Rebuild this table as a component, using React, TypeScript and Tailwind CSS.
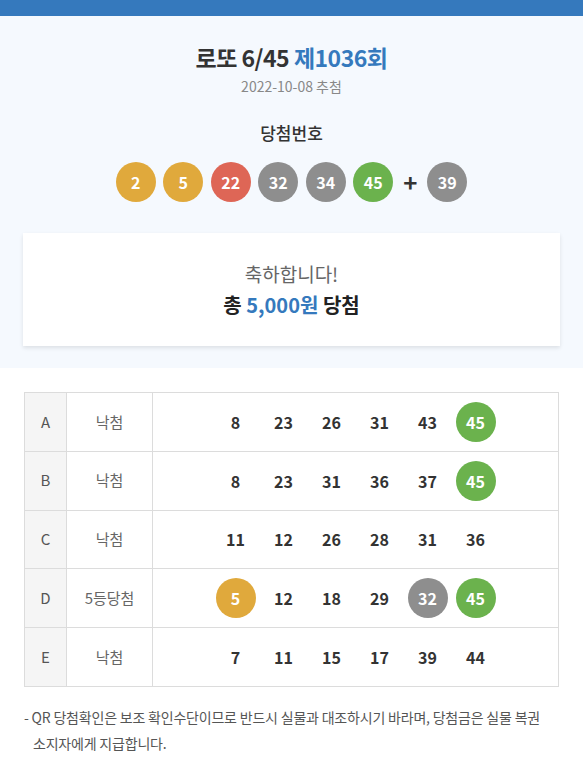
import React from 'react'

const ballColor = (n: number) => {
  if (n <= 10) return 'bg-[#e0a93c]'
  if (n <= 20) return 'bg-[#4a8fd6]'
  if (n <= 30) return 'bg-[#de6656]'
  if (n <= 40) return 'bg-[#8e8e8e]'
  return 'bg-[#6bb24d]'
}

const Ball = ({ n }: { n: number }) => (
  <div className={`flex h-10 w-10 items-center justify-center rounded-full text-[16px] font-semibold text-white ${ballColor(n)}`}>
    {n}
  </div>
)

const winning = [2, 5, 22, 32, 34, 45]
const bonus = 39

const games = [
  { key: 'A', result: '낙첨', nums: [8, 23, 26, 31, 43, 45] },
  { key: 'B', result: '낙첨', nums: [8, 23, 31, 36, 37, 45] },
  { key: 'C', result: '낙첨', nums: [11, 12, 26, 28, 31, 36] },
  { key: 'D', result: '5등당첨', nums: [5, 12, 18, 29, 32, 45] },
  { key: 'E', result: '낙첨', nums: [7, 11, 15, 17, 39, 44] },
]

export default function App() {
  return (
    <div className="min-h-[760px] bg-white font-['Noto_Sans_CJK_KR','Noto_Sans',sans-serif] text-[#333]">
      {/* 상단 바 */}
      <div className="h-4 bg-[#3579bd]" />

      {/* 당첨번호 영역 */}
      <div className="bg-[#f5f9fe] px-[23px] pt-[25px] pb-[22px]">
        <h1 className="text-center text-[23px] font-bold leading-[32px] tracking-[-0.5px]">
          로또 6/45 <span className="text-[#3579bd]">제1036회</span>
        </h1>
        <p className="mt-[3px] text-center text-[14px] leading-5 text-[#888]">2022-10-08 추첨</p>

        <p className="mt-[25px] text-center text-[17px] font-medium leading-6">당첨번호</p>
        <div className="mt-[17px] flex items-center justify-center gap-[7.5px]">
          {winning.map((n) => (
            <Ball key={n} n={n} />
          ))}
          <div className="flex w-[19px] items-center justify-center text-[24px] font-bold leading-none text-[#333]">+</div>
          <Ball n={bonus} />
        </div>

        <div className="mt-[31px] flex h-[113px] flex-col items-center justify-center bg-white shadow-[0_2px_4px_rgba(0,0,0,0.1)]">
          <p className="text-[19px] leading-[26px] text-[#666]">축하합니다!</p>
          <p className="mt-[5px] text-[20px] font-bold leading-[26px] text-[#222]">
            총 <span className="text-[#3579bd]">5,000원</span> 당첨
          </p>
        </div>
      </div>

      {/* 게임별 결과 */}
      <div className="px-6 pt-6">
        <div className="border-t border-l border-[#dcdcdc]">
          {games.map((g) => (
            <div key={g.key} className="flex h-[58.8px] border-b border-[#dcdcdc]">
              <div className="flex w-[42px] items-center justify-center border-r border-[#dcdcdc] bg-[#f5f5f5] text-[15px] text-[#555]">
                {g.key}
              </div>
              <div className="flex w-[86px] items-center justify-center border-r border-[#dcdcdc] text-[15px] text-[#666]">
                {g.result}
              </div>
              <div className="flex flex-1 items-center justify-center gap-2 border-r border-[#dcdcdc]">
                {g.nums.map((n) =>
                  winning.includes(n) ? (
                    <Ball key={n} n={n} />
                  ) : (
                    <div key={n} className="flex h-10 w-10 items-center justify-center text-[16px] font-semibold text-[#333]">
                      {n}
                    </div>
                  ),
                )}
              </div>
            </div>
          ))}
        </div>

        <p className="mt-[17px] pl-[9px] pr-2 -indent-[9px] text-[14px] leading-[26px] tracking-[-0.2px] text-[#555]">
          - QR 당첨확인은 보조 확인수단이므로 반드시 실물과 대조하시기 바라며, 당첨금은 실물 복권 소지자에게 지급합니다.
        </p>
      </div>
    </div>
  )
}
